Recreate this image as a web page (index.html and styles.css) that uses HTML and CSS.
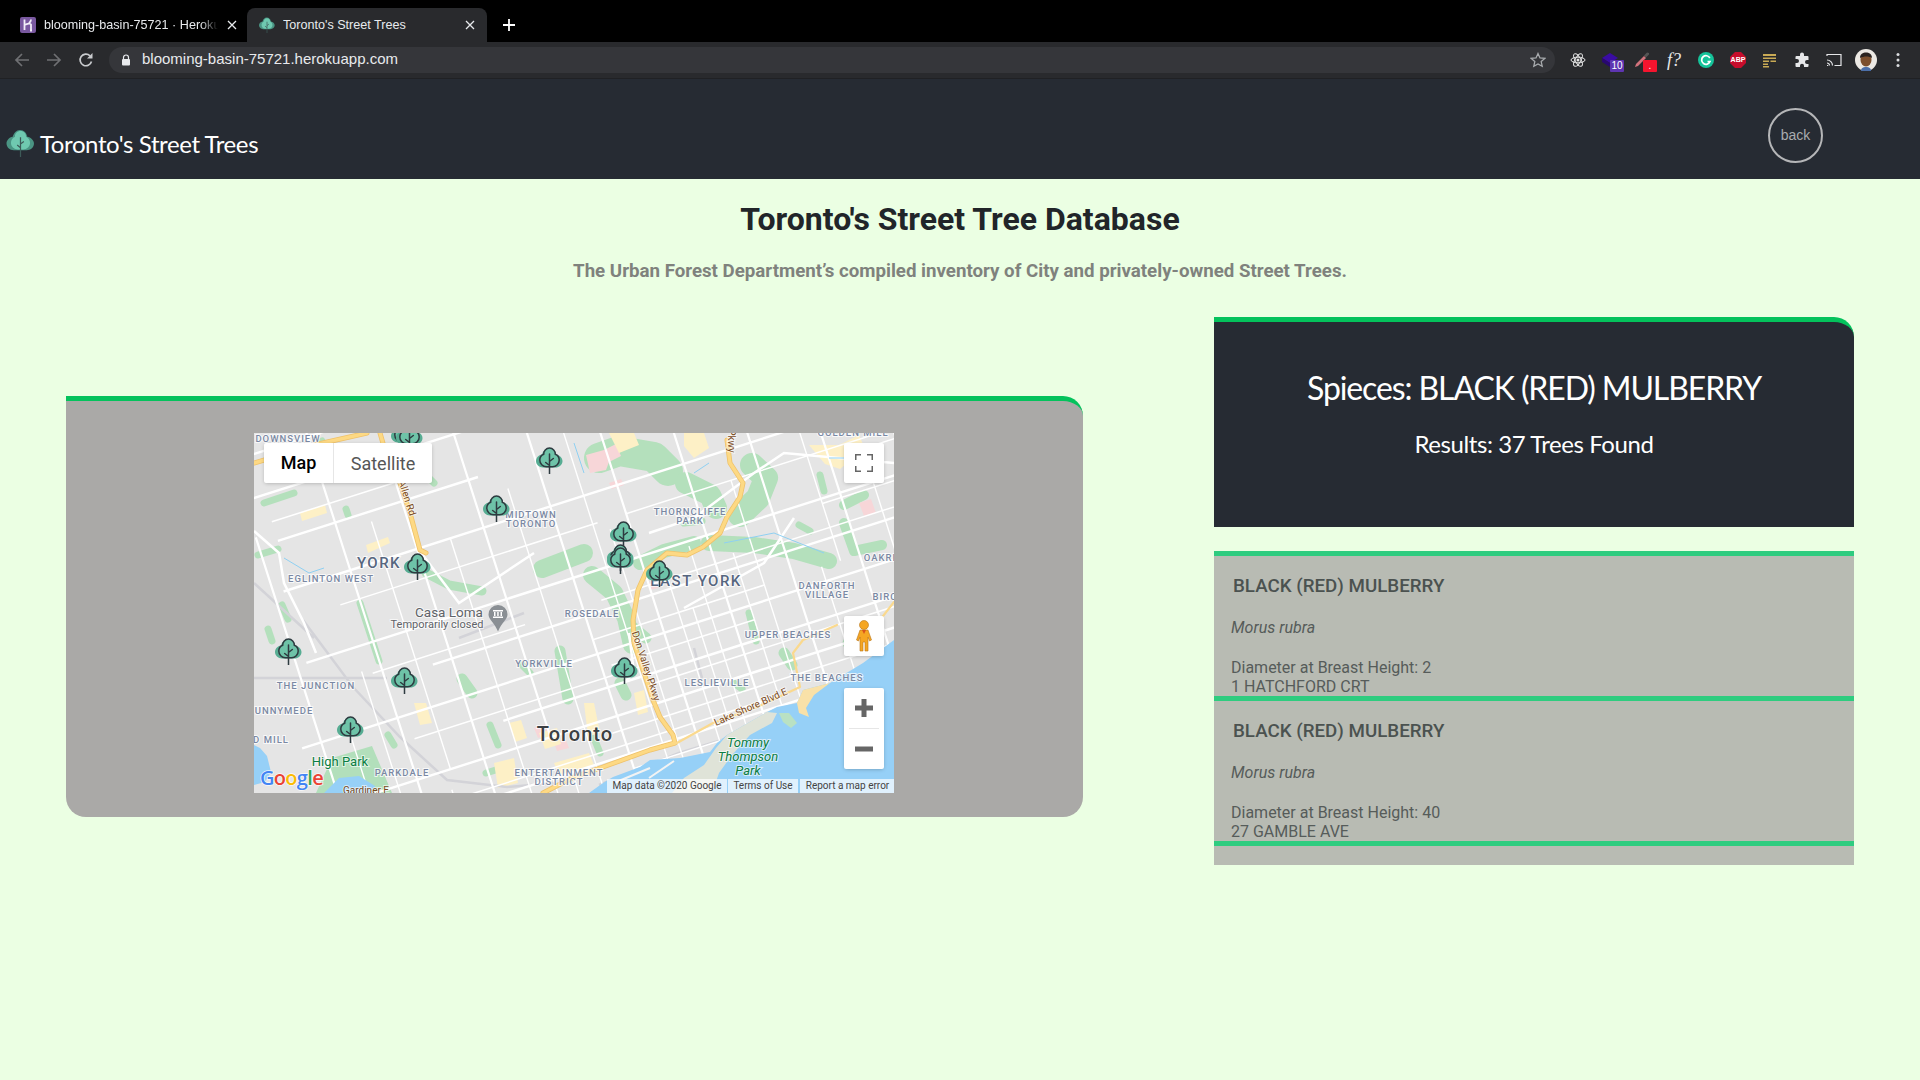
FILE: index.html
```html
<!DOCTYPE html>
<html lang="en">
<head>
<meta charset="utf-8">
<title>Toronto's Street Trees</title>
<link rel="stylesheet" href="styles.css">
</head>
<body>
<svg class="defs" width="0" height="0" aria-hidden="true">
  <defs>
    <symbol id="tree" viewBox="0 0 27 27">
      <path d="M13 1c4 0 6.500 3 7 6.500c3.500.5 6.500 3.500 6.500 6.500c0 4-3.500 6.500-7 6.500h-12.500c-4 0-7-3-7-6.500c0-3 2.500-6 6-6.500C7 4 9.500 1 13 1z" fill="#57ad93"/>
      <path d="M13.500 1c3.300 0 6 3 5.800 6.200c2.500 1 3.900 3.500 3.900 5.800c0 3.700-3 6.700-6.500 6.700h-6.400c-3.500 0-6.500-3-6.500-6.700c0-2.300 1.400-4.800 3.900-5.800C7.500 4 10.200 1 13.500 1z" fill="#6ec3a8" stroke="#2e3b40" stroke-width="1.500"/>
      <path d="M13.500 7V27M13.500 14.500l3.800-3M13.500 18.500l-3.800-3" fill="none" stroke="#2e3b40" stroke-width="1.500" stroke-linecap="round"/>
    </symbol>
    <symbol id="logo" viewBox="0 0 27 27">
      <path d="M13 1c4 0 6.500 3 7 6.500c3.500.5 6.500 3.500 6.500 6.500c0 4-3.500 6.500-7 6.500h-12.500c-4 0-7-3-7-6.500c0-3 2.500-6 6-6.500C7 4 9.500 1 13 1z" fill="#4a9483"/>
      <path d="M13.500 2c3.300 0 5.500 2.500 5.300 5.500c2.500 1 3.900 3.500 3.900 5.800c0 3.700-3 6.400-6.500 6.400h-5.400c-3.500 0-6.500-2.700-6.500-6.400c0-2.300 1.400-4.800 3.900-5.800C8 4.500 10.200 2 13.500 2z" fill="#6fc9b0"/>
      <path d="M13.500 8V27M13.500 14.500l3.200-2.500M13.500 18l-3.200-2.500" fill="none" stroke="#3d5a58" stroke-width="1.200"/>
    </symbol>
  </defs>
</svg>

<div class="tabstrip">
  <div class="tab">
    <svg class="favicon" viewBox="0 0 16 16"><rect width="16" height="16" rx="2" fill="#79589f"/><path d="M4.500 2.500V13M4.500 8c3-1.500 6-2 6.500-.5V13M11 2.500c0 1.500-.5 2.500-2 3.500M10 13.500h2" fill="none" stroke="#f2edf7" stroke-width="1.800"/></svg>
    <span class="tab-title fade">blooming-basin-75721 · Heroku</span>
    <svg class="tab-close" viewBox="0 0 10 10"><path d="M1 1L9 9M9 1L1 9" stroke="#e8eaed" stroke-width="1.300"/></svg>
  </div>
  <div class="tab active">
    <svg class="favicon"><use href="#logo"/></svg>
    <span class="tab-title">Toronto's Street Trees</span>
    <svg class="tab-close" viewBox="0 0 10 10"><path d="M1 1L9 9M9 1L1 9" stroke="#e8eaed" stroke-width="1.300"/></svg>
  </div>
  <svg class="newtab" viewBox="0 0 14 14"><path d="M7 1V13M1 7H13" stroke="#fff" stroke-width="1.800"/></svg>
</div>

<div class="toolbar">
  <div class="nav-icons">
    <svg viewBox="0 0 16 16"><path d="M15 8H2M8 2L2 8l6 6" fill="none" stroke="#6f7073" stroke-width="1.700"/></svg>
    <svg viewBox="0 0 16 16"><path d="M1 8h13M8 2l6 6-6 6" fill="none" stroke="#6f7073" stroke-width="1.700"/></svg>
    <svg viewBox="0 0 16 16"><path d="M13.500 9.500A5.800 5.800 0 1 1 12 3.800" fill="none" stroke="#c9cbce" stroke-width="1.700"/><path d="M14.500 1v5.500H9z" fill="#c9cbce"/></svg>
  </div>
  <div class="omnibox">
    <svg class="lock" viewBox="0 0 10 12"><path d="M2.500 5V3.500a2.500 2.500 0 0 1 5 0V5" fill="none" stroke="#e8eaed" stroke-width="1.200"/><rect x="1" y="5" width="8" height="6.500" rx="1" fill="#e8eaed"/></svg>
    <span class="url">blooming-basin-75721.herokuapp.com</span>
    <svg class="star" viewBox="0 0 16 16"><path d="M8 1.500l2 4.400 4.800.5-3.600 3.200 1 4.700L8 11.900 3.800 14.300l1-4.700L1.200 6.400 6 5.900z" fill="none" stroke="#a8abae" stroke-width="1.300"/></svg>
  </div>
  <div class="ext-icons">
    <span class="ext"><svg viewBox="0 0 16 16"><g fill="none" stroke="#e4e4e4" stroke-width="1"><ellipse cx="8" cy="8" rx="7" ry="2.800"/><ellipse cx="8" cy="8" rx="7" ry="2.800" transform="rotate(60 8 8)"/><ellipse cx="8" cy="8" rx="7" ry="2.800" transform="rotate(120 8 8)"/></g><circle cx="8" cy="8" r="1.500" fill="#e4e4e4"/></svg></span>
    <span class="ext"><svg viewBox="0 0 16 16"><path d="M8 1l8 5-8 5-8-5z" fill="#3a0ca3"/><path d="M0 6v4l8 5V11z" fill="#28086f"/></svg><b class="badge purple">10</b></span>
    <span class="ext"><svg viewBox="0 0 16 16"><path d="M15 1l-2-.5-3 3 2 2 3-3z" fill="#555"/><path d="M10 4L2 12l-1 3 3-1 8-8z" fill="#d2727c"/></svg><b class="badge red">.</b></span>
    <span class="ext fq">f?</span>
    <span class="ext"><svg viewBox="0 0 16 16"><circle cx="8" cy="8" r="8" fill="#15c39a"/><path d="M11.800 6A4.300 4.300 0 1 0 12 9.500H9.500" fill="none" stroke="#fff" stroke-width="1.700"/></svg></span>
    <span class="ext"><svg viewBox="0 0 16 16"><path d="M5 0h6l5 5v6l-5 5H5l-5-5V5z" fill="#c70d2c"/></svg><b class="abp">ABP</b></span>
    <span class="ext"><svg viewBox="0 0 16 16"><path d="M1 2h13v2H1zM1 5.500h13v1.500H1zM1 8.500h6V10H1zM8.500 8.500H14V10H8.500zM1 11.500h5V13H1zM1 14h6v1.500H1z" fill="#c9aa55"/></svg></span>
    <span class="ext"><svg viewBox="0 0 16 16"><path d="M6 2.500a2 2 0 0 1 4 0V4h3.500a1 1 0 0 1 1 1v3H13a2 2 0 0 0 0 4h1.500v2a1 1 0 0 1-1 1H10v-1.200a2 2 0 0 0-4 0V15H2.500a1 1 0 0 1-1-1v-3H3a2 2 0 0 0 0-4H1.500V5a1 1 0 0 1 1-1H6z" fill="#e6e7e9"/></svg></span>
    <span class="ext"><svg viewBox="0 0 16 16"><path d="M1 4V2.500h14v11H8.500M1 13.500h1.200M1 11a2.500 2.500 0 0 1 2.500 2.500M1 8a5.500 5.500 0 0 1 5.500 5.500" fill="none" stroke="#e6e7e9" stroke-width="1.200"/></svg></span>
    <span class="ext"><svg class="avatar" viewBox="0 0 22 22"><circle cx="11" cy="11" r="11" fill="#ece9e4"/><ellipse cx="11" cy="11" rx="5.500" ry="6.500" fill="#7c4f2d"/><path d="M5 9c0-4 3-5.500 6-5.500s6 1.500 6 5.500c-3-2-8-2-12 0z" fill="#2b2320"/><path d="M6 22c0-3 2-4 5-4s5 1 5 4z" fill="#4c6fa8"/></svg></span>
    <span class="ext"><svg viewBox="0 0 16 16"><circle cx="8" cy="2.500" r="1.500" fill="#dcdde0"/><circle cx="8" cy="8" r="1.500" fill="#dcdde0"/><circle cx="8" cy="13.500" r="1.500" fill="#dcdde0"/></svg></span>
  </div>
</div>

<header class="navbar">
  <a class="brand"><svg class="brand-logo"><use href="#logo"/></svg><span>Toronto's Street Trees</span></a>
  <button class="back">back</button>
</header>

<main class="page">
  <h1>Toronto's Street Tree Database</h1>
  <p class="lead">The Urban Forest Department’s compiled inventory of City and privately-owned Street Trees.</p>
  <div class="columns">
    <section class="map-card">
      <div class="map">
        <svg class="map-svg" viewBox="0 0 640 360" width="640" height="360">
          <rect width="640" height="360" fill="#e5e5e5"/>
          <!-- parks -->
          <path d="M78 325l40-12 17 40 3 7H62z" fill="#b2dfbb"/>
          <g fill="none" stroke="#b4e0bc" stroke-linecap="round" stroke-linejoin="round">
            <path stroke-width="30" d="M345 25L365 18L400 24L414 38"/>
            <path stroke-width="22" d="M432 50L456 62L462 75"/>
            <path stroke-width="24" d="M498 32L512 45L504 65L486 82"/>
            <path stroke-width="16" d="M455 110L500 112L540 118L575 128"/>
            <path stroke-width="14" d="M386 130L410 118L440 110"/>
            <path stroke-width="18" d="M338 142L360 160L372 185L378 212"/>
            <path stroke-width="18" d="M288 136L330 120"/>
            <path stroke-width="9" d="M172 140L195 152L228 158"/>
            <path stroke-width="10" d="M590 90L600 118L628 112M590 72L610 62"/>
            <path stroke-width="7" d="M45 40L72 28M4 122L24 116M14 196L18 208M106 170L125 228M430 90L448 88M10 70L40 60M150 20L180 50"/>
            <path stroke-width="11" d="M306 218L314 266M366 250L372 262M208 246L218 260M530 220L538 232M594 210L606 196M380 195L392 205"/>
            <path stroke-width="7" d="M134 302L140 312M236 292L244 312M268 232L276 240M545 92L556 98M566 42L570 58M495 180L502 208M480 250L488 256M92 76L94 82M68 8L72 16M340 305L346 320M232 340L245 336M28 172L34 186"/>
          </g>
          <g fill="#f7d6d8">
            <path d="M332 22l18-5 12-6 5 12-12 6-3 8-16 3zM355 50l12-4 3 6-12 4zM605 70l12-4 5 14-12 3zM280 295l12-4 4 10-12 4zM300 310l12-3 3 8-12 3zM394 150l8-2 2 7-8 2z"/>
          </g>
          <g fill="#fdf0c6">
            <path d="M430 0h20l5 15-15 10-10-12zM555 12l30 0 20-10 6 14-25 20-15-5zM240 330l20-5 4 25-20 5zM160 270l12 0 6 20-12 2zM255 290l12-3 6 18-12 4zM285 300l18-5 4 16-16 5zM330 270l10 0 6 30-12 3zM46 80l25-8 2 8-25 8zM112 112l22-8 2 6-22 10zM355 0l25 0 5 12-20 8zM380 260l10-3 4 22-10 3zM300 330l35-10 5 12-35 10z"/>
          </g>
          <!-- rail -->
          <g fill="none" stroke="#d3d3d8" stroke-width="2.500">
            <path d="M0 245H133M49 187L99 254L146 304L193 347L253 354L300 350M0 150L60 205M205 205L270 180"/>
            <path d="M440 215l8 30M345 352L425 320L540 285"/>
          </g>
          <!-- roads -->
          <g transform="rotate(-17.700)" stroke="#fff" fill="none">
            <g stroke-width="2.400">
              <path d="M-20 62H500M-20 160H650M-20 235H800M-50 315H800M-50 380H900M-80 450H900M-60 525H800M-60 600H800"/>
              <path d="M-10 110H200M-10 20H400M250 -10H500M100 275H620M150 350H820M100 420H880M120 490H860M120 560H820"/>
            </g>
            <g stroke-width="1.500">
              <path d="M-10 90H120M30 190H300M330 190H720M40 265H200M280 265H760M60 340H300M80 410H420M100 470H700M150 510H420M180 540H700M260 300H440M270 330H420M300 360H560M250 395H560M260 435H620M280 460H700M450 120H620M480 45H640M420 80H700M560 200H800M520 240H860M620 300H820M660 380H880M600 520H860"/>
            </g>
          </g>
          <g transform="rotate(-17.700)" stroke="#fff" fill="none">
            <g stroke-width="2.200">
              <path d="M50 -10V420M-30 100V400M120 -10V700M190 30V380M260 -80V640M330 -100V580M400 -80V650M470 -100V720M540 40V700M610 60V640M680 150V560M750 180V560"/>
            </g>
            <g stroke-width="1.400">
              <path d="M85 120V380M155 160V600M225 130V500M295 -20V560M310 200V560M350 250V600M365 300V640M380 240V500M420 260V600M440 190V560M500 300V660M520 100V300M575 200V640M645 260V560M715 320V500M30 260V520M0 300V380M80 400V520M180 420V620M200 420V620M235 520V640"/>
            </g>
          </g>
          <g fill="none" stroke="#fff" stroke-width="2.500">
            <path d="M0 98L25 120L30 150L50 190L62 220M165 117L205 170L280 120M395 100L440 85L500 40L530 20L640 30M540 85L510 130L430 175M375 200L380 240L370 250"/>
          </g>
          <!-- rivers -->
          <g fill="none" stroke="#8fd0f2" stroke-width="1">
            <path d="M30 125l25 15 15-5M320 10l10 30M440 40l15-10M470 110l50-10 50 20M575 25l20 0"/>
          </g>
          <!-- water, drawn over the street grid -->
          <path d="M640 207L609 230L576 250L549 257L543 270L523 274L513 279L473 302L463 310L456 319L426 325L396 327L386 334L359 344L349 350L335 360H640z" fill="#96d0f7"/>
          <path d="M6 315l7 8 4 16-6 10-11 3V312zM85 345l20-2 16 10-2 7H70z" fill="#96d0f7"/>
          <path d="M473 302L513 279L523 280L518 290L496 302L478 322L465 340L458 360H418L430 345L450 332L462 315z" fill="#dfe3d8"/>
          <path d="M543 270L549 257L576 250L560 262L552 275L555 284L545 280z" fill="#f9e1a8"/>
          <path d="M525 280l10 0 8 10-6 5-8-6z" fill="#b9e1c3"/>
          <path d="M396 335L360 350M420 328L395 345" fill="none" stroke="#f3f3f3" stroke-width="2"/>
          <!-- expressways -->
          <g fill="none" stroke-linecap="round" stroke-linejoin="round">
            <g stroke="#efc26a" stroke-width="5">
              <path d="M0 30L60 12L113 0M126 0L133 24L146 50L156 80L166 117L172 120"/>
              <path d="M473 7L476 30L489 50L486 64L473 84L466 100L449 114L433 122L413 120L393 137L384 157L379 187L380 210L399 267L406 284L419 302L421 310L396 317L349 334L320 344L289 360"/>
            </g>
            <g stroke="#fdd984" stroke-width="3.400">
              <path d="M0 30L60 12L113 0M126 0L133 24L146 50L156 80L166 117L172 120"/>
              <path d="M473 7L476 30L489 50L486 64L473 84L466 100L449 114L433 122L413 120L393 137L384 157L379 187L380 210L399 267L406 284L419 302L421 310L396 317L349 334L320 344L289 360"/>
            </g>
            <path d="M423 310L459 290L503 274L546 254L539 220L549 207L583 192M626 187L640 169" stroke="#fad98e" stroke-width="2.200"/>
          </g>
          <!-- labels -->
          <g class="lbl">
            <text x="34" y="9">DOWNSVIEW</text>
            <text x="77" y="149">EGLINTON WEST</text>
            <text x="277" y="85">MIDTOWN</text>
            <text x="277" y="94">TORONTO</text>
            <text x="436" y="82">THORNCLIFFE</text>
            <text x="436" y="91">PARK</text>
            <text x="599" y="3">GOLDEN MILL</text>
            <text x="626" y="128">OAKRI</text>
            <text x="573" y="156">DANFORTH</text>
            <text x="573" y="165">VILLAGE</text>
            <text x="631" y="167">BIRC</text>
            <text x="338" y="184">ROSEDALE</text>
            <text x="534" y="205">UPPER BEACHES</text>
            <text x="573" y="248">THE BEACHES</text>
            <text x="463" y="253">LESLIEVILLE</text>
            <text x="290" y="234">YORKVILLE</text>
            <text x="62" y="256">THE JUNCTION</text>
            <text x="30" y="281">UNNYMEDE</text>
            <text x="17" y="310">D MILL</text>
            <text x="148" y="343">PARKDALE</text>
            <text x="305" y="343">ENTERTAINMENT</text>
            <text x="305" y="352">DISTRICT</text>
          </g>
          <g class="lbl-big">
            <text x="125" y="135">YORK</text>
            <text x="442" y="153">EAST YORK</text>
          </g>
          <text class="lbl-city" x="321" y="308">Toronto</text>
          <text class="lbl-poi" x="195" y="184">Casa Loma</text>
          <text class="lbl-poi-sub" x="183" y="195">Temporarily closed</text>
          <path d="M244 172a9.500 9.500 0 0 1 9.500 9.500c0 5-6 8-9.500 17c-3.500-9-9.500-12-9.500-17a9.500 9.500 0 0 1 9.500-9.500z" fill="#8a8f94"/>
          <path d="M239 177h10v1.500h-10zM240 179h1.500v4H240zM243.200 179h1.500v4h-1.500zM246.500 179h1.500v4h-1.500zM239 183.500h10v1.500h-10z" fill="#fff"/>
          <text class="lbl-park" x="86" y="333">High Park</text>
          <g class="lbl-park it">
            <text x="494" y="314">Tommy</text>
            <text x="494" y="328">Thompson</text>
            <text x="494" y="342">Park</text>
          </g>
          <g class="lbl-road">
            <text transform="translate(498 277) rotate(-24)">Lake Shore Blvd E</text>
            <text transform="translate(389 234) rotate(72)">Don Valley Pkwy</text>
            <text transform="translate(150 66) rotate(72)">Allen Rd</text>
            <text transform="translate(474 8) rotate(90)">Pkwy</text>
            <text x="112" y="361">Gardiner E</text>
          </g>
          <!-- markers -->
          <use href="#tree" x="137" y="-11" width="27" height="27"/>
          <use href="#tree" x="142" y="-9" width="27" height="27"/>
          <use href="#tree" x="282" y="14" width="27" height="27"/>
          <use href="#tree" x="229" y="62" width="27" height="27"/>
          <use href="#tree" x="150" y="120" width="27" height="27"/>
          <use href="#tree" x="356" y="88" width="27" height="27"/>
          <use href="#tree" x="353" y="111" width="27" height="27"/>
          <use href="#tree" x="353" y="114" width="27" height="27"/>
          <use href="#tree" x="392" y="127" width="27" height="27"/>
          <use href="#tree" x="21" y="205" width="27" height="27"/>
          <use href="#tree" x="137" y="234" width="27" height="27"/>
          <use href="#tree" x="83" y="283" width="27" height="27"/>
          <use href="#tree" x="357" y="224" width="27" height="27"/>
          <text class="glogo" x="6" y="352"><tspan fill="#4285f4">G</tspan><tspan fill="#ea4335">o</tspan><tspan fill="#fbbc05">o</tspan><tspan fill="#4285f4">g</tspan><tspan fill="#34a853">l</tspan><tspan fill="#ea4335">e</tspan></text>
        </svg>
        <div class="map-type ctl">
          <span class="mt-map">Map</span>
          <span class="mt-sat">Satellite</span>
        </div>
        <div class="fullscreen ctl"><svg viewBox="0 0 18 18"><path d="M0 6V0H6M12 0H18V6M18 12V18H12M6 18H0V12" fill="none" stroke="#666" stroke-width="3"/></svg></div>
        <div class="pegman ctl"><svg viewBox="0 0 18 32"><circle cx="9" cy="5" r="4.500" fill="#f5a623" stroke="#b9751a" stroke-width=".6"/><path d="M5 10h8l3.500 10-2 1-1.500-4v14h-3V22h-2v9H5V17l-1.500 4-2-1z" fill="#f5a623" stroke="#b9751a" stroke-width=".6"/><path d="M7 10l2 4 2-4z" fill="#d9541e"/></svg></div>
        <div class="zoom ctl">
          <svg viewBox="0 0 18 18"><path d="M0 9H18M9 0V18" stroke="#666" stroke-width="5"/></svg>
          <i class="zoom-div"></i>
          <svg viewBox="0 0 18 18"><path d="M0 9H18" stroke="#666" stroke-width="5"/></svg>
        </div>
        <div class="attrib"><span class="a1">Map data ©2020 Google</span><span class="a2">Terms of Use</span><span class="a3">Report a map error</span></div>
      </div>
    </section>
    <aside class="side">
      <div class="summary">
        <h2>Spieces: BLACK (RED) MULBERRY</h2>
        <h3>Results: 37 Trees Found</h3>
      </div>
      <div class="list">
        <article class="item">
          <h4>BLACK (RED) MULBERRY</h4>
          <p class="sci">Morus rubra</p>
          <p class="meta">Diameter at Breast Height: 2<br>1 HATCHFORD CRT</p>
        </article>
        <article class="item">
          <h4>BLACK (RED) MULBERRY</h4>
          <p class="sci">Morus rubra</p>
          <p class="meta">Diameter at Breast Height: 40<br>27 GAMBLE AVE</p>
        </article>
        <article class="item"></article>
      </div>
    </aside>
  </div>
</main>
</body>
</html>
```
FILE: styles.css
```css
* { box-sizing: border-box; }
html, body { margin: 0; height: 100%; }
body { width: 1920px; height: 1080px; overflow: hidden; background: #ebffe3; font-family: "Roboto", sans-serif; }
.defs { position: absolute; }

/* browser chrome */
.tabstrip { height: 42px; background: #000; padding-top: 8px; display: flex; align-items: stretch; font-family: "Liberation Sans", sans-serif; }
.tab { width: 247px; display: flex; align-items: center; padding: 0 10px 0 20px; color: #e8eaed; font-size: 12.600px; }
.tab.active { width: 240px; background: #292a2d; border-radius: 8px 8px 0 0; padding: 0 12px 0 12px; }
.favicon { width: 16px; height: 16px; flex: none; margin-right: 8px; }
.tab-title { flex: 1; white-space: nowrap; overflow: hidden; }
.tab-title.fade { -webkit-mask-image: linear-gradient(90deg, #000 90%, transparent); mask-image: linear-gradient(90deg, #000 90%, transparent); margin-right: 9px; }
.tab-close { width: 10px; height: 10px; flex: none; }
.newtab { width: 14px; height: 14px; margin: 10px 0 0 15px; }

.toolbar { height: 37px; background: #292a2d; border-bottom: 1px solid #202124; display: flex; align-items: flex-start; padding-top: 5px; }
.nav-icons { width: 109px; display: flex; gap: 16px; padding: 5px 0 0 14px; flex: none; }
.nav-icons svg { width: 16px; height: 16px; }
.omnibox { flex: 1; height: 26px; background: #35363a; border-radius: 13px; display: flex; align-items: center; padding: 0 9px 0 12px; margin-right: 7px; }
.lock { width: 10px; height: 12px; margin-right: 11px; }
.url { flex: 1; color: #e8eaed; font-family: "Liberation Sans", sans-serif; font-size: 15px; line-height: 22px; margin-top: -2px; }
.star { width: 16px; height: 16px; }
.ext-icons { display: flex; padding-right: 6px; flex: none; }
.ext { width: 32px; height: 26px; display: flex; align-items: center; justify-content: center; position: relative; }
.ext svg { width: 16px; height: 16px; }
.ext svg.avatar { width: 22px; height: 22px; }
.badge { position: absolute; left: 16px; top: 13px; width: 14px; height: 12px; border-radius: 1px; font: 400 10px/12px "Liberation Sans", sans-serif; color: #fff; text-align: center; }
.badge.purple { background: #5e35b1; }
.badge.red { background: #f5142e; left: 17px; }
.abp { position: absolute; inset: 0; text-align: center; font: 700 7px/26px "Liberation Sans", sans-serif; color: #fff; }
.fq { font: italic 18px "Liberation Serif", serif; color: #e6e7e9; }

/* navbar */
.navbar { height: 100px; background: #262b33; display: flex; align-items: flex-start; justify-content: space-between; padding: 29px 97px 0 6px; }
.brand { display: flex; align-items: center; color: #fff; font-family: "Lato", sans-serif; font-size: 24px; line-height: 30px; letter-spacing: -.4px; margin-top: 21px; font-weight: 400; }
.brand-logo { width: 29px; height: 28px; margin-right: 5px; margin-top: -3px; }
.back { width: 55px; height: 55px; border-radius: 50%; border: 2px solid #b5b6b8; background: transparent; color: #a9abae; font: 14px "Liberation Sans", sans-serif; padding: 0 0 1px; }

/* page */
.page { padding: 21px 66px 0; }
h1 { margin: 0; font-size: 32px; line-height: 38px; font-weight: 700; color: #212529; text-align: center; }
.lead { margin: 21px 0 0; font-size: 18.700px; line-height: 24px; font-weight: 700; color: #7f827d; text-align: center; }
.columns { display: flex; justify-content: space-between; align-items: flex-start; margin-top: 34px; }

.map-card { width: 1017px; margin-top: 79px; background: #aaa9a7; border-top: 5px solid #04c25c; border-radius: 0 20px 20px 20px; padding: 32px 1px 24px 0; display: flex; justify-content: center; }
.map { position: relative; width: 640px; height: 360px; overflow: hidden; }
.map-svg { display: block; }
.lbl text { font: 500 9.500px "Roboto", sans-serif; letter-spacing: 1px; fill: #7a88a3; text-anchor: middle; stroke: #fff; stroke-width: 2px; stroke-opacity: .75; paint-order: stroke; }
.lbl-big text { font: 500 15px "Roboto", sans-serif; letter-spacing: 1.500px; fill: #56667f; text-anchor: middle; stroke: #fff; stroke-width: 2px; stroke-opacity: .75; paint-order: stroke; }
.lbl-city { font: 500 20px "Roboto", sans-serif; letter-spacing: 1px; fill: #3c4043; text-anchor: middle; stroke: #fff; stroke-width: 2px; stroke-opacity: .75; paint-order: stroke; }
.lbl-poi { font: 400 13.500px "Roboto", sans-serif; fill: #5f6368; text-anchor: middle; stroke: #fff; stroke-width: 2px; stroke-opacity: .7; paint-order: stroke; }
.lbl-poi-sub { font: 400 11px "Roboto", sans-serif; fill: #5f6368; text-anchor: middle; stroke: #fff; stroke-width: 2px; stroke-opacity: .7; paint-order: stroke; }
.lbl-park, .lbl-park text { font: 400 13px "Roboto", sans-serif; fill: #0b7d42; text-anchor: middle; stroke: #fff; stroke-width: 2px; stroke-opacity: .6; paint-order: stroke; }
.lbl-park.it text { font-style: italic; }
.lbl-road text { font: 400 10px "Roboto", sans-serif; fill: #7a4a1c; text-anchor: middle; stroke: #fff; stroke-width: 2px; stroke-opacity: .6; paint-order: stroke; }
.glogo { font: 600 20px "Open Sans", sans-serif; letter-spacing: -.7px; stroke: #fff; stroke-width: 1.500px; stroke-opacity: .8; paint-order: stroke; }

.ctl { position: absolute; background: #fff; border-radius: 2px; box-shadow: 0 1px 4px -1px rgba(0,0,0,.3); display: flex; align-items: center; justify-content: center; }
.map-type { left: 10px; top: 10px; width: 168px; height: 40px; font-size: 18px; }
.mt-map { width: 70px; height: 40px; line-height: 40px; text-align: center; font-weight: 500; color: #000; border-right: 1px solid #e6e6e6; }
.mt-sat { width: 98px; text-align: center; color: #565656; }
.fullscreen { left: 590px; top: 10px; width: 40px; height: 40px; }
.fullscreen svg { width: 18px; height: 18px; }
.pegman { left: 590px; top: 183px; width: 40px; height: 40px; }
.pegman svg { width: 18px; height: 32px; }
.zoom { left: 590px; top: 255px; width: 40px; height: 81px; flex-direction: column; }
.zoom svg { width: 18px; height: 18px; margin: 11px 0; flex: none; }
.zoom-div { width: 30px; height: 1px; background: #e6e6e6; flex: none; }
.attrib { position: absolute; left: 353px; bottom: 0; height: 14px; display: flex; gap: 1px; font: 400 10px/14px "Roboto", sans-serif; color: #444; }
.attrib span { background: rgba(255,255,255,.7); text-align: center; white-space: nowrap; }
.a1 { width: 120px; }
.a2 { width: 70px; }
.a3 { width: 95px; margin-left: 1px; }

.side { width: 640px; }
.summary { height: 210px; background: #262b33; border-top: 5px solid #04c25c; border-radius: 0 20px 0 0; padding-top: 47px; text-align: center; color: #fff; font-family: "Lato", sans-serif; }
h2 { margin: 0; font-size: 32px; line-height: 38px; font-weight: 400; letter-spacing: -1.100px; }
h3 { margin: 22px 0 0; font-size: 24px; line-height: 30px; font-weight: 400; letter-spacing: -.43px; }
.list { height: 314px; margin-top: 24px; overflow: hidden; background: #b8bbb3; }
.item { height: 145px; overflow: hidden; border-top: 5px solid #2ecc7f; padding: 20px 17px 0; color: #565c5a; }
h4 { margin: 0 0 0 2px; font-size: 18.750px; line-height: 21px; font-weight: 500; color: #4b5250; }
.sci { margin: 21px 0 0; font-size: 16px; line-height: 19px; font-style: italic; font-weight: 400; }
.meta { margin: 21px 0 0; font-size: 16px; line-height: 19px; font-weight: 400; }
```
